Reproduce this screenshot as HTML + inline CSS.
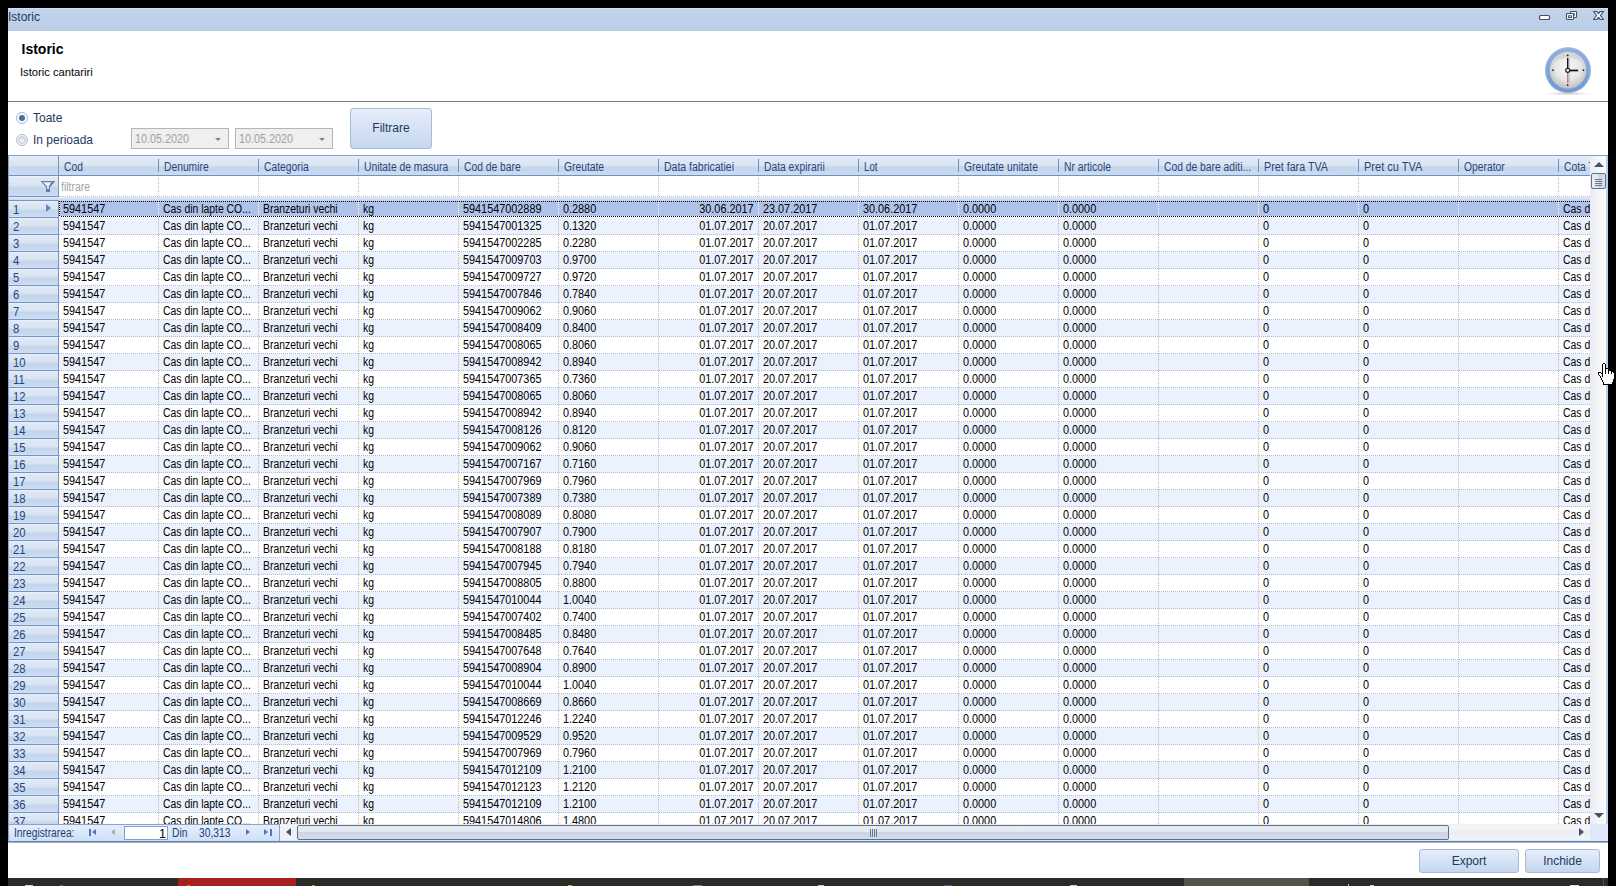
<!DOCTYPE html>
<html><head><meta charset="utf-8"><title>Istoric</title>
<style>
*{box-sizing:border-box;margin:0;padding:0}
html,body{width:1616px;height:886px;overflow:hidden;background:#000}
body{position:relative;font-family:"Liberation Sans",sans-serif;font-size:11px;color:#000}
.abs{position:absolute}
#win{position:absolute;left:8px;top:8px;width:1600px;height:870px;background:#fff}
#title{position:absolute;left:8px;top:8px;width:1600px;height:23px;background:#bfd2ea}
#title .t{position:absolute;left:0px;top:2px;font-size:12px;line-height:15px;color:#1e395b;white-space:nowrap}
#hline{position:absolute;left:8px;top:101px;width:1600px;height:1px;background:#7a7a7a}
#h1{position:absolute;left:21px;top:41px;font-size:13.5px;font-weight:bold;line-height:16px;white-space:nowrap}
#h2{position:absolute;left:20px;top:66px;font-size:11px;line-height:13px;white-space:nowrap}
.lbl{position:absolute;font-size:12px;line-height:14px;color:#1e395b;white-space:nowrap}
.radio{position:absolute;width:12px;height:12px;border-radius:50%;border:1px solid #8e9cb3;background:radial-gradient(circle at 50% 40%,#fff 0,#f1f3f7 45%,#cfd5df 100%)}
.radio.on::after{content:"";position:absolute;left:2px;top:2px;width:6px;height:6px;border-radius:50%;background:#3a5f96}
.date{position:absolute;top:128px;width:98px;height:20px;border:1px solid #b5b5b5;background:#efefef;color:#a0a0a0;font-size:12px;line-height:18px;padding-left:3px;white-space:nowrap}
.date i{position:absolute;right:6px;top:8px;width:0;height:0;border-left:3.5px solid transparent;border-right:3.5px solid transparent;border-top:4px solid #8a8a8a}
.btn{position:absolute;border:1px solid #a9bbd6;border-radius:3px;background:linear-gradient(#e6eefa 0,#d5e2f4 50%,#c5d7ee 100%);color:#1e395b;font-size:12px;text-align:center;white-space:nowrap}
/* grid */
#grid{position:absolute;left:8px;top:155px;width:1600px;height:687px;background:#fff;border-left:1px solid #86a5d2;overflow:hidden}
.hdr{position:absolute;left:0;top:0;width:1581px;height:21px;border-top:1px solid #7f9fcd;border-bottom:1px solid #7f9fcd;background:linear-gradient(#dde7f5 0,#d3dff1 45%,#c4d4ec 55%,#bccfe9 85%,#cbdaef 100%)}
.hc0{position:absolute;left:0;top:0;width:50px;height:19px;border-right:1px solid #7f9fcd}
.hc{position:absolute;top:0;width:100px;height:19px;color:#27457a;font-size:11px;line-height:19px;padding-left:5px;white-space:nowrap;overflow:hidden}
.hc::after{content:"";position:absolute;right:0;top:3px;width:1px;height:13px;background:#7f9fcd}
.frow{position:absolute;left:0;top:21px;width:1581px;height:21px;background:#fff}
.fc0{position:absolute;left:0;top:0;width:50px;height:21px;border-right:1px solid #7f9fcd;border-bottom:1px solid #7f9fcd;background:linear-gradient(#dde7f5 0,#d3dff1 45%,#c4d4ec 55%,#bccfe9 85%,#cbdaef 100%)}
.fc0 svg{position:absolute;left:32px;top:5px}
.ftxt{position:absolute;left:52px;top:4px;color:#a3a3a3;font-size:11px;line-height:14px}
.gap{position:absolute;left:0;top:42px;width:1581px;height:4px;background:linear-gradient(#eef3fb,#d5e1f3)}
.rows{position:absolute;left:0;top:46px;width:1581px;height:623px;overflow:hidden}
.r{position:absolute;left:0;width:1581px;height:17px;background:#fff}
.r.alt{background:#e9f0fc}
.r.sel{background:#afc3ea}
.rh{position:absolute;left:0;top:-1px;width:50px;height:18px;border-top:1px solid #7f9fcd;border-right:1px solid #7f9fcd;color:#27457a;font-size:11px;line-height:18px;padding-left:5px;background:linear-gradient(#dde7f5 0,#d3dff1 45%,#c4d4ec 55%,#bccfe9 85%,#cbdaef 100%)}
.rh i{position:absolute;left:37px;top:4px;width:0;height:0;border-top:4.5px solid transparent;border-bottom:4.5px solid transparent;border-left:5px solid #5484c8}
.c{position:absolute;top:0;width:100px;height:17px;line-height:16px;padding-left:4px;white-space:nowrap;overflow:hidden;font-size:11px}
.c.ra{text-align:right;padding-right:5px;padding-left:0}
.rows{top:45px;height:624px}
.vl{position:absolute;width:1px;background:repeating-linear-gradient(to bottom,transparent 0,transparent 1px,#aab6c8 1px,#aab6c8 2px)}
.hl{position:absolute;left:51px;top:16px;width:1530px;height:1px;background:repeating-linear-gradient(to right,#aab6c8 0,#aab6c8 1px,transparent 1px,transparent 2px)}
.r.sel .hl{background:repeating-linear-gradient(to right,#000 0,#000 1px,#fff 1px,#fff 2px);top:15px}
.r.sel .hl.t{top:0}
.r.sel .hl.b2{top:16px;background:repeating-linear-gradient(to right,#fff 0,#fff 1px,#dfe8f8 1px,#dfe8f8 2px)}
.vlw{position:absolute;top:1px;width:1px;height:14px;background:repeating-linear-gradient(to bottom,#fff 0,#fff 1px,transparent 1px,transparent 2px)}
/* vertical scrollbar */
#vs{position:absolute;left:1581px;top:1px;width:17px;height:668px;background:linear-gradient(to right,#e9ecf1 0,#f4f5f8 50%,#fbfcfd 100%);border-right:1px solid #bcd3f0}
#vs .up{position:absolute;left:4px;top:6px;width:0;height:0;border-left:5px solid transparent;border-right:5px solid transparent;border-bottom:5px solid #46536f}
#vs .dn{position:absolute;left:4px;top:657px;width:0;height:0;border-left:5px solid transparent;border-right:5px solid transparent;border-top:5px solid #46536f}
#vs .th{position:absolute;left:1px;top:17px;width:15px;height:16px;border:1px solid #5f7394;border-radius:2px;background:linear-gradient(to right,#e8ecf3 0,#e3e8f0 45%,#c9d1df 55%,#d8deea 100%)}
#vs .th b{position:absolute;left:3px;width:7px;height:1px;background:#6b7890}
/* navigator */
#nav{position:absolute;left:0;top:669px;width:1599px;height:18px;border-top:1px solid #86a5d2;border-bottom:1px solid #6f89b3;background:linear-gradient(#e6eefb 0,#dbe7f9 50%,#cfdff6 100%)}
#nav .nt{position:absolute;top:1px;line-height:15px;font-size:11px;color:#27457a;white-space:nowrap}
#nav .inp{position:absolute;left:115px;top:1px;width:44px;height:14px;border:1px solid #7f9fcd;background:#fff;text-align:right;padding-right:2px;line-height:13px;font-size:11px;color:#000}
#nav .sep{position:absolute;left:270px;top:0;width:1px;height:16px;background:#86a5d2}
#hs{position:absolute;left:271px;top:0;width:1310px;height:16px;background:linear-gradient(#fdfdfe 0,#f1f4f9 100%)}
#hs .th{position:absolute;left:17px;top:0px;width:1152px;height:15px;border:1px solid #5a6f92;border-radius:2px;background:linear-gradient(#e8ecf3 0,#e4e9f1 45%,#ccd4e2 50%,#d7ddea 100%)}
#hs .th b{position:absolute;top:3px;width:1px;height:8px;background:#6b7890}
#corner{position:absolute;left:1581px;top:0;width:18px;height:16px;background:#dde9fa}
.tri-l{position:absolute;width:0;height:0;border-top:4px solid transparent;border-bottom:4px solid transparent;border-right:5px solid #4d78b5}
.tri-r{position:absolute;width:0;height:0;border-top:4px solid transparent;border-bottom:4px solid transparent;border-left:5px solid #4d78b5}
.bar{position:absolute;width:2px;height:8px;background:#4d78b5}
.c{font-size:11.6px;overflow:visible}
.c span{display:inline-block;transform-origin:0 50%}
.c .s{transform:scaleX(.897)}
.c .n{transform:scaleX(.92)}
.c.ra span{transform-origin:100% 50%}
.hc{font-size:11.6px;line-height:22px}
.hc span{display:inline-block;transform-origin:0 50%;transform:scaleX(.896)}
.rh{font-size:11.6px}
.c .n{transform:scaleX(.935)}
.rh{padding-left:4px;line-height:16px}
.ftxt{font-size:11.6px;transform-origin:0 50%;transform:scaleX(.9);display:inline-block}
#h1{font-size:14px;top:41px;left:22px}
.date{height:21px;line-height:20px}
.date span{display:inline-block;transform-origin:0 50%;transform:scaleX(.95)}
#nav{border-top:none;border-bottom:1px solid #6985b0;height:18px;background:none}
#nav .np{position:absolute;left:0;top:0;width:270px;height:17px;border-top:1px solid #86a5d2;background:linear-gradient(#e6eefb 0,#dbe7f9 50%,#cfdff6 100%)}
#nav .nt{font-size:11.6px;top:2px;transform-origin:0 50%;transform:scaleX(.885)}
#nav .sep{height:17px}
#hs{height:17px;background:linear-gradient(#ececee 0,#f6f6f8 8%,#eceef2 50%,#f0f3f9 90%,#d3e2f7 100%)}
#hs .th{top:1px}
#corner{height:17px}
#nav{border-top:1px solid transparent}
#nav .np{top:-1px}
#nav .nt{top:1px}
#hs{top:-1px}
#corner{top:-1px}
#nav .sep{top:-1px}
#nav .nt{top:0px}
#nav .inp{padding-right:1px;font-size:11.6px;line-height:14px}
#h1{left:21.5px}
#h2{font-size:11.2px}
.date span{transform:scaleX(.9)}
.date{padding-left:2.5px}
.hl{left:50px;width:1531px}
.rh{line-height:18px}
.hdr{overflow:hidden}
#gtop{position:absolute;left:0;top:0;width:1599px;height:1px;background:#7f9fcd}
#vs{width:18px;border-right:2px solid #b9d1f0}
.radio{border:1px solid #a9b8d0;background:#fbfcfe}
.radio::after{content:"";position:absolute;left:1px;top:1px;width:8px;height:8px;border-radius:50%;border:1px solid #c3c8d2;background:radial-gradient(circle at 50% 65%,#f6f6f6 0,#e2e2e2 60%,#cfcfcf 100%)}
.radio.on::after{left:2px;top:2px;width:6px;height:6px;border:none;background:#4a6fa5}
.date i{right:7px;top:9px;border-left:3px solid transparent;border-right:3px solid transparent;border-top:3.5px solid #858585}
.c.ra{padding-right:5.5px}
.radio::after{box-sizing:border-box}
#title{background:linear-gradient(#cfdef2 0,#cfdef2 1px,#c2d4ec 1px,#bbcee7 22px,#b8c9de 22px,#b8c9de 23px)}
.lbl{font-size:12.4px;transform-origin:0 50%;transform:scaleX(.968)}
.hdr,.fc0,.rh,.hc0,.hc::after{border-color:#7694c2}
.hdr{border-top-color:#7290bc;border-bottom-color:#7290bc;background:linear-gradient(#e8f0fb 0,#e8f0fb 1px,#e2e9f5 1px,#d9e4f2 10px,#c4d5eb 11px,#cadaef 18px,#c6dcf8 18px,#c6dcf8 19px)}
.hc::after{background:#7290bc;box-shadow:1px 0 0 #e3edfa}
.fc0{background:linear-gradient(#e8f0fb 0,#e8f0fb 1px,#e2e9f5 1px,#d9e4f2 10px,#c4d5eb 11px,#cadaef 19px,#c6dcf8 19px,#c6dcf8 20px)}
.rh{background:linear-gradient(#e6effb 0,#e6effb 1px,#e0e9f5 1px,#d8e3f2 8px,#c4d5eb 9px,#cadaef 15px,#cfe0f7 15px,#cfe0f7 16px)}
.rh i{top:3px;border-top:4.5px solid transparent;border-bottom:4.5px solid transparent;border-left:5px solid #5b8acb}
.vsel{position:absolute;left:50px;top:0;width:1px;height:16px;background:repeating-linear-gradient(to bottom,#000 0,#000 1px,#fff 1px,#fff 2px)}
#nav{box-shadow:0 1px 0 #a9bbd6}
.tri-l{border-top-width:4.5px;border-bottom-width:4.5px}
.tri-r{border-top-width:4.5px;border-bottom-width:4.5px}
.bar{height:9px}
#grid{height:688px}
#nav>.tri-l,#nav>.tri-r{border-top-width:3.5px;border-bottom-width:3.5px;border-left-width:0;border-right-width:0}
#nav>.tri-l{border-right:4.5px solid #4d78b5}
#nav>.tri-r{border-left:4.5px solid #4d78b5}
#nav>.bar{height:7px}
#nav .nt{color:#1f3d73}
.r.alt{background:#ebf2fd}
.gap{background:linear-gradient(#e4edf9,#bfd1ec)}
.vl{background:repeating-linear-gradient(to bottom,transparent 0,transparent 1px,#b2bccb 1px,#b2bccb 2px)}
.hl{background:repeating-linear-gradient(to right,#b2bccb 0,#b2bccb 1px,transparent 1px,transparent 2px)}
.r.sel .hl.t{background:repeating-linear-gradient(to right,#000 0,#000 1px,transparent 1px,transparent 2px)}
.c{font-size:12.5px;line-height:15.5px}
.c .s{transform:scaleX(.832)}
.c .n{transform:scaleX(.868)}
.hc{font-size:12.5px;line-height:21.4px}
.hc span{transform:scaleX(.8315)}
.rh{font-size:12.5px;line-height:17.4px}
.rh span{display:inline-block;transform-origin:0 50%;transform:scaleX(.9)}
.ftxt{font-size:12.5px;transform:scaleX(.835)}
#nav .nt{font-size:12.5px;line-height:14.4px;transform:scaleX(.821)}
#nav .inp{font-size:12.5px}
.c{line-height:17.5px}
.hc{line-height:23.4px}
.rh{line-height:19.4px}
#nav .nt{line-height:16.4px}
.hc span{transform:scaleX(.824)}
.hc{padding-left:4.6px}
#nav{border-bottom-color:#6a82aa;box-shadow:0 1px 0 #9db0cd}
#h1{top:41.4px}

</style></head>
<body>
<div id="win"></div>
<div id="title"><span class="t">Istoric</span></div>
<div id="h1">Istoric</div>
<div id="h2">Istoric cantariri</div>
<div id="hline"></div>
<div class="radio on" style="left:16px;top:112px"></div>
<div class="lbl" style="left:33px;top:111px">Toate</div>
<div class="radio" style="left:16px;top:134px"></div>
<div class="lbl" style="left:33px;top:133px">In perioada</div>
<div class="date" style="left:131px"><span>10.05.2020</span><i></i></div>
<div class="date" style="left:235px"><span>10.05.2020</span><i></i></div>
<div class="btn" style="left:350px;top:108px;width:82px;height:41px;line-height:39px">Filtrare</div>
<div id="grid">
<div class="hdr"><div class="hc0"></div>
<div class="hc" style="left:50px"><span>Cod</span></div>
<div class="hc" style="left:150px"><span>Denumire</span></div>
<div class="hc" style="left:250px"><span>Categoria</span></div>
<div class="hc" style="left:350px"><span>Unitate de masura</span></div>
<div class="hc" style="left:450px"><span>Cod de bare</span></div>
<div class="hc" style="left:550px"><span>Greutate</span></div>
<div class="hc" style="left:650px"><span style="transform:scaleX(0.84)">Data fabricatiei</span></div>
<div class="hc" style="left:750px"><span>Data expirarii</span></div>
<div class="hc" style="left:850px"><span style="transform:scaleX(0.78)">Lot</span></div>
<div class="hc" style="left:950px"><span>Greutate unitate</span></div>
<div class="hc" style="left:1050px"><span>Nr articole</span></div>
<div class="hc" style="left:1150px"><span>Cod de bare aditi...</span></div>
<div class="hc" style="left:1250px"><span style="transform:scaleX(0.858)">Pret fara TVA</span></div>
<div class="hc" style="left:1350px"><span style="transform:scaleX(0.882)">Pret cu TVA</span></div>
<div class="hc" style="left:1450px"><span>Operator</span></div>
<div class="hc" style="left:1550px"><span>Cota TVA</span></div>
</div>
<div class="frow"><div class="fc0"><svg width="14" height="11" viewBox="0 0 14 11"><path d="M0.6 0.6 L13.4 0.6 L8.4 5.8 L8.4 10.4 L5.6 10.4 L5.6 5.8 Z" fill="#eef3fb" stroke="#6381ad" stroke-width="1.2" stroke-linejoin="miter"/><path d="M10.2 1.2 L12.8 1.2 L8.4 5.8 L7.6 5.8 Z" fill="#6b7c99"/><rect x="5.2" y="8" width="3.6" height="2.9" fill="#5b80b8"/></svg></div><span class="ftxt">filtrare</span></div>
<div class="gap"></div>
<div class="rows">
<div class="r sel" style="top:1px"><div class="rh"><span>1</span><i></i></div>
<div class="c" style="left:50px"><span class="n">5941547</span></div>
<div class="c" style="left:150px"><span class="s">Cas din lapte CO...</span></div>
<div class="c" style="left:250px"><span class="s">Branzeturi vechi</span></div>
<div class="c" style="left:350px"><span class="s">kg</span></div>
<div class="c" style="left:450px"><span class="n">5941547002889</span></div>
<div class="c" style="left:550px"><span class="n">0.2880</span></div>
<div class="c ra" style="left:650px"><span class="n">30.06.2017</span></div>
<div class="c" style="left:750px"><span class="n">23.07.2017</span></div>
<div class="c" style="left:850px"><span class="n">30.06.2017</span></div>
<div class="c" style="left:950px"><span class="n">0.0000</span></div>
<div class="c" style="left:1050px"><span class="n">0.0000</span></div>
<div class="c" style="left:1250px"><span class="n">0</span></div>
<div class="c" style="left:1350px"><span class="n">0</span></div>
<div class="c" style="left:1550px"><span class="s">Cas d</span></div>
<div class="hl"></div>
<div class="hl t"></div><div class="hl b2"></div><div class="vsel"></div>
<div class="vlw" style="left:149px"></div>
<div class="vlw" style="left:249px"></div>
<div class="vlw" style="left:349px"></div>
<div class="vlw" style="left:449px"></div>
<div class="vlw" style="left:549px"></div>
<div class="vlw" style="left:649px"></div>
<div class="vlw" style="left:749px"></div>
<div class="vlw" style="left:849px"></div>
<div class="vlw" style="left:949px"></div>
<div class="vlw" style="left:1049px"></div>
<div class="vlw" style="left:1149px"></div>
<div class="vlw" style="left:1249px"></div>
<div class="vlw" style="left:1349px"></div>
<div class="vlw" style="left:1449px"></div>
<div class="vlw" style="left:1549px"></div>
<div class="vlw" style="left:1649px"></div>
</div>
<div class="r alt" style="top:18px"><div class="rh"><span>2</span></div>
<div class="c" style="left:50px"><span class="n">5941547</span></div>
<div class="c" style="left:150px"><span class="s">Cas din lapte CO...</span></div>
<div class="c" style="left:250px"><span class="s">Branzeturi vechi</span></div>
<div class="c" style="left:350px"><span class="s">kg</span></div>
<div class="c" style="left:450px"><span class="n">5941547001325</span></div>
<div class="c" style="left:550px"><span class="n">0.1320</span></div>
<div class="c ra" style="left:650px"><span class="n">01.07.2017</span></div>
<div class="c" style="left:750px"><span class="n">20.07.2017</span></div>
<div class="c" style="left:850px"><span class="n">01.07.2017</span></div>
<div class="c" style="left:950px"><span class="n">0.0000</span></div>
<div class="c" style="left:1050px"><span class="n">0.0000</span></div>
<div class="c" style="left:1250px"><span class="n">0</span></div>
<div class="c" style="left:1350px"><span class="n">0</span></div>
<div class="c" style="left:1550px"><span class="s">Cas d</span></div>
<div class="hl"></div>
</div>
<div class="r" style="top:35px"><div class="rh"><span>3</span></div>
<div class="c" style="left:50px"><span class="n">5941547</span></div>
<div class="c" style="left:150px"><span class="s">Cas din lapte CO...</span></div>
<div class="c" style="left:250px"><span class="s">Branzeturi vechi</span></div>
<div class="c" style="left:350px"><span class="s">kg</span></div>
<div class="c" style="left:450px"><span class="n">5941547002285</span></div>
<div class="c" style="left:550px"><span class="n">0.2280</span></div>
<div class="c ra" style="left:650px"><span class="n">01.07.2017</span></div>
<div class="c" style="left:750px"><span class="n">20.07.2017</span></div>
<div class="c" style="left:850px"><span class="n">01.07.2017</span></div>
<div class="c" style="left:950px"><span class="n">0.0000</span></div>
<div class="c" style="left:1050px"><span class="n">0.0000</span></div>
<div class="c" style="left:1250px"><span class="n">0</span></div>
<div class="c" style="left:1350px"><span class="n">0</span></div>
<div class="c" style="left:1550px"><span class="s">Cas d</span></div>
<div class="hl"></div>
</div>
<div class="r alt" style="top:52px"><div class="rh"><span>4</span></div>
<div class="c" style="left:50px"><span class="n">5941547</span></div>
<div class="c" style="left:150px"><span class="s">Cas din lapte CO...</span></div>
<div class="c" style="left:250px"><span class="s">Branzeturi vechi</span></div>
<div class="c" style="left:350px"><span class="s">kg</span></div>
<div class="c" style="left:450px"><span class="n">5941547009703</span></div>
<div class="c" style="left:550px"><span class="n">0.9700</span></div>
<div class="c ra" style="left:650px"><span class="n">01.07.2017</span></div>
<div class="c" style="left:750px"><span class="n">20.07.2017</span></div>
<div class="c" style="left:850px"><span class="n">01.07.2017</span></div>
<div class="c" style="left:950px"><span class="n">0.0000</span></div>
<div class="c" style="left:1050px"><span class="n">0.0000</span></div>
<div class="c" style="left:1250px"><span class="n">0</span></div>
<div class="c" style="left:1350px"><span class="n">0</span></div>
<div class="c" style="left:1550px"><span class="s">Cas d</span></div>
<div class="hl"></div>
</div>
<div class="r" style="top:69px"><div class="rh"><span>5</span></div>
<div class="c" style="left:50px"><span class="n">5941547</span></div>
<div class="c" style="left:150px"><span class="s">Cas din lapte CO...</span></div>
<div class="c" style="left:250px"><span class="s">Branzeturi vechi</span></div>
<div class="c" style="left:350px"><span class="s">kg</span></div>
<div class="c" style="left:450px"><span class="n">5941547009727</span></div>
<div class="c" style="left:550px"><span class="n">0.9720</span></div>
<div class="c ra" style="left:650px"><span class="n">01.07.2017</span></div>
<div class="c" style="left:750px"><span class="n">20.07.2017</span></div>
<div class="c" style="left:850px"><span class="n">01.07.2017</span></div>
<div class="c" style="left:950px"><span class="n">0.0000</span></div>
<div class="c" style="left:1050px"><span class="n">0.0000</span></div>
<div class="c" style="left:1250px"><span class="n">0</span></div>
<div class="c" style="left:1350px"><span class="n">0</span></div>
<div class="c" style="left:1550px"><span class="s">Cas d</span></div>
<div class="hl"></div>
</div>
<div class="r alt" style="top:86px"><div class="rh"><span>6</span></div>
<div class="c" style="left:50px"><span class="n">5941547</span></div>
<div class="c" style="left:150px"><span class="s">Cas din lapte CO...</span></div>
<div class="c" style="left:250px"><span class="s">Branzeturi vechi</span></div>
<div class="c" style="left:350px"><span class="s">kg</span></div>
<div class="c" style="left:450px"><span class="n">5941547007846</span></div>
<div class="c" style="left:550px"><span class="n">0.7840</span></div>
<div class="c ra" style="left:650px"><span class="n">01.07.2017</span></div>
<div class="c" style="left:750px"><span class="n">20.07.2017</span></div>
<div class="c" style="left:850px"><span class="n">01.07.2017</span></div>
<div class="c" style="left:950px"><span class="n">0.0000</span></div>
<div class="c" style="left:1050px"><span class="n">0.0000</span></div>
<div class="c" style="left:1250px"><span class="n">0</span></div>
<div class="c" style="left:1350px"><span class="n">0</span></div>
<div class="c" style="left:1550px"><span class="s">Cas d</span></div>
<div class="hl"></div>
</div>
<div class="r" style="top:103px"><div class="rh"><span>7</span></div>
<div class="c" style="left:50px"><span class="n">5941547</span></div>
<div class="c" style="left:150px"><span class="s">Cas din lapte CO...</span></div>
<div class="c" style="left:250px"><span class="s">Branzeturi vechi</span></div>
<div class="c" style="left:350px"><span class="s">kg</span></div>
<div class="c" style="left:450px"><span class="n">5941547009062</span></div>
<div class="c" style="left:550px"><span class="n">0.9060</span></div>
<div class="c ra" style="left:650px"><span class="n">01.07.2017</span></div>
<div class="c" style="left:750px"><span class="n">20.07.2017</span></div>
<div class="c" style="left:850px"><span class="n">01.07.2017</span></div>
<div class="c" style="left:950px"><span class="n">0.0000</span></div>
<div class="c" style="left:1050px"><span class="n">0.0000</span></div>
<div class="c" style="left:1250px"><span class="n">0</span></div>
<div class="c" style="left:1350px"><span class="n">0</span></div>
<div class="c" style="left:1550px"><span class="s">Cas d</span></div>
<div class="hl"></div>
</div>
<div class="r alt" style="top:120px"><div class="rh"><span>8</span></div>
<div class="c" style="left:50px"><span class="n">5941547</span></div>
<div class="c" style="left:150px"><span class="s">Cas din lapte CO...</span></div>
<div class="c" style="left:250px"><span class="s">Branzeturi vechi</span></div>
<div class="c" style="left:350px"><span class="s">kg</span></div>
<div class="c" style="left:450px"><span class="n">5941547008409</span></div>
<div class="c" style="left:550px"><span class="n">0.8400</span></div>
<div class="c ra" style="left:650px"><span class="n">01.07.2017</span></div>
<div class="c" style="left:750px"><span class="n">20.07.2017</span></div>
<div class="c" style="left:850px"><span class="n">01.07.2017</span></div>
<div class="c" style="left:950px"><span class="n">0.0000</span></div>
<div class="c" style="left:1050px"><span class="n">0.0000</span></div>
<div class="c" style="left:1250px"><span class="n">0</span></div>
<div class="c" style="left:1350px"><span class="n">0</span></div>
<div class="c" style="left:1550px"><span class="s">Cas d</span></div>
<div class="hl"></div>
</div>
<div class="r" style="top:137px"><div class="rh"><span>9</span></div>
<div class="c" style="left:50px"><span class="n">5941547</span></div>
<div class="c" style="left:150px"><span class="s">Cas din lapte CO...</span></div>
<div class="c" style="left:250px"><span class="s">Branzeturi vechi</span></div>
<div class="c" style="left:350px"><span class="s">kg</span></div>
<div class="c" style="left:450px"><span class="n">5941547008065</span></div>
<div class="c" style="left:550px"><span class="n">0.8060</span></div>
<div class="c ra" style="left:650px"><span class="n">01.07.2017</span></div>
<div class="c" style="left:750px"><span class="n">20.07.2017</span></div>
<div class="c" style="left:850px"><span class="n">01.07.2017</span></div>
<div class="c" style="left:950px"><span class="n">0.0000</span></div>
<div class="c" style="left:1050px"><span class="n">0.0000</span></div>
<div class="c" style="left:1250px"><span class="n">0</span></div>
<div class="c" style="left:1350px"><span class="n">0</span></div>
<div class="c" style="left:1550px"><span class="s">Cas d</span></div>
<div class="hl"></div>
</div>
<div class="r alt" style="top:154px"><div class="rh"><span>10</span></div>
<div class="c" style="left:50px"><span class="n">5941547</span></div>
<div class="c" style="left:150px"><span class="s">Cas din lapte CO...</span></div>
<div class="c" style="left:250px"><span class="s">Branzeturi vechi</span></div>
<div class="c" style="left:350px"><span class="s">kg</span></div>
<div class="c" style="left:450px"><span class="n">5941547008942</span></div>
<div class="c" style="left:550px"><span class="n">0.8940</span></div>
<div class="c ra" style="left:650px"><span class="n">01.07.2017</span></div>
<div class="c" style="left:750px"><span class="n">20.07.2017</span></div>
<div class="c" style="left:850px"><span class="n">01.07.2017</span></div>
<div class="c" style="left:950px"><span class="n">0.0000</span></div>
<div class="c" style="left:1050px"><span class="n">0.0000</span></div>
<div class="c" style="left:1250px"><span class="n">0</span></div>
<div class="c" style="left:1350px"><span class="n">0</span></div>
<div class="c" style="left:1550px"><span class="s">Cas d</span></div>
<div class="hl"></div>
</div>
<div class="r" style="top:171px"><div class="rh"><span>11</span></div>
<div class="c" style="left:50px"><span class="n">5941547</span></div>
<div class="c" style="left:150px"><span class="s">Cas din lapte CO...</span></div>
<div class="c" style="left:250px"><span class="s">Branzeturi vechi</span></div>
<div class="c" style="left:350px"><span class="s">kg</span></div>
<div class="c" style="left:450px"><span class="n">5941547007365</span></div>
<div class="c" style="left:550px"><span class="n">0.7360</span></div>
<div class="c ra" style="left:650px"><span class="n">01.07.2017</span></div>
<div class="c" style="left:750px"><span class="n">20.07.2017</span></div>
<div class="c" style="left:850px"><span class="n">01.07.2017</span></div>
<div class="c" style="left:950px"><span class="n">0.0000</span></div>
<div class="c" style="left:1050px"><span class="n">0.0000</span></div>
<div class="c" style="left:1250px"><span class="n">0</span></div>
<div class="c" style="left:1350px"><span class="n">0</span></div>
<div class="c" style="left:1550px"><span class="s">Cas d</span></div>
<div class="hl"></div>
</div>
<div class="r alt" style="top:188px"><div class="rh"><span>12</span></div>
<div class="c" style="left:50px"><span class="n">5941547</span></div>
<div class="c" style="left:150px"><span class="s">Cas din lapte CO...</span></div>
<div class="c" style="left:250px"><span class="s">Branzeturi vechi</span></div>
<div class="c" style="left:350px"><span class="s">kg</span></div>
<div class="c" style="left:450px"><span class="n">5941547008065</span></div>
<div class="c" style="left:550px"><span class="n">0.8060</span></div>
<div class="c ra" style="left:650px"><span class="n">01.07.2017</span></div>
<div class="c" style="left:750px"><span class="n">20.07.2017</span></div>
<div class="c" style="left:850px"><span class="n">01.07.2017</span></div>
<div class="c" style="left:950px"><span class="n">0.0000</span></div>
<div class="c" style="left:1050px"><span class="n">0.0000</span></div>
<div class="c" style="left:1250px"><span class="n">0</span></div>
<div class="c" style="left:1350px"><span class="n">0</span></div>
<div class="c" style="left:1550px"><span class="s">Cas d</span></div>
<div class="hl"></div>
</div>
<div class="r" style="top:205px"><div class="rh"><span>13</span></div>
<div class="c" style="left:50px"><span class="n">5941547</span></div>
<div class="c" style="left:150px"><span class="s">Cas din lapte CO...</span></div>
<div class="c" style="left:250px"><span class="s">Branzeturi vechi</span></div>
<div class="c" style="left:350px"><span class="s">kg</span></div>
<div class="c" style="left:450px"><span class="n">5941547008942</span></div>
<div class="c" style="left:550px"><span class="n">0.8940</span></div>
<div class="c ra" style="left:650px"><span class="n">01.07.2017</span></div>
<div class="c" style="left:750px"><span class="n">20.07.2017</span></div>
<div class="c" style="left:850px"><span class="n">01.07.2017</span></div>
<div class="c" style="left:950px"><span class="n">0.0000</span></div>
<div class="c" style="left:1050px"><span class="n">0.0000</span></div>
<div class="c" style="left:1250px"><span class="n">0</span></div>
<div class="c" style="left:1350px"><span class="n">0</span></div>
<div class="c" style="left:1550px"><span class="s">Cas d</span></div>
<div class="hl"></div>
</div>
<div class="r alt" style="top:222px"><div class="rh"><span>14</span></div>
<div class="c" style="left:50px"><span class="n">5941547</span></div>
<div class="c" style="left:150px"><span class="s">Cas din lapte CO...</span></div>
<div class="c" style="left:250px"><span class="s">Branzeturi vechi</span></div>
<div class="c" style="left:350px"><span class="s">kg</span></div>
<div class="c" style="left:450px"><span class="n">5941547008126</span></div>
<div class="c" style="left:550px"><span class="n">0.8120</span></div>
<div class="c ra" style="left:650px"><span class="n">01.07.2017</span></div>
<div class="c" style="left:750px"><span class="n">20.07.2017</span></div>
<div class="c" style="left:850px"><span class="n">01.07.2017</span></div>
<div class="c" style="left:950px"><span class="n">0.0000</span></div>
<div class="c" style="left:1050px"><span class="n">0.0000</span></div>
<div class="c" style="left:1250px"><span class="n">0</span></div>
<div class="c" style="left:1350px"><span class="n">0</span></div>
<div class="c" style="left:1550px"><span class="s">Cas d</span></div>
<div class="hl"></div>
</div>
<div class="r" style="top:239px"><div class="rh"><span>15</span></div>
<div class="c" style="left:50px"><span class="n">5941547</span></div>
<div class="c" style="left:150px"><span class="s">Cas din lapte CO...</span></div>
<div class="c" style="left:250px"><span class="s">Branzeturi vechi</span></div>
<div class="c" style="left:350px"><span class="s">kg</span></div>
<div class="c" style="left:450px"><span class="n">5941547009062</span></div>
<div class="c" style="left:550px"><span class="n">0.9060</span></div>
<div class="c ra" style="left:650px"><span class="n">01.07.2017</span></div>
<div class="c" style="left:750px"><span class="n">20.07.2017</span></div>
<div class="c" style="left:850px"><span class="n">01.07.2017</span></div>
<div class="c" style="left:950px"><span class="n">0.0000</span></div>
<div class="c" style="left:1050px"><span class="n">0.0000</span></div>
<div class="c" style="left:1250px"><span class="n">0</span></div>
<div class="c" style="left:1350px"><span class="n">0</span></div>
<div class="c" style="left:1550px"><span class="s">Cas d</span></div>
<div class="hl"></div>
</div>
<div class="r alt" style="top:256px"><div class="rh"><span>16</span></div>
<div class="c" style="left:50px"><span class="n">5941547</span></div>
<div class="c" style="left:150px"><span class="s">Cas din lapte CO...</span></div>
<div class="c" style="left:250px"><span class="s">Branzeturi vechi</span></div>
<div class="c" style="left:350px"><span class="s">kg</span></div>
<div class="c" style="left:450px"><span class="n">5941547007167</span></div>
<div class="c" style="left:550px"><span class="n">0.7160</span></div>
<div class="c ra" style="left:650px"><span class="n">01.07.2017</span></div>
<div class="c" style="left:750px"><span class="n">20.07.2017</span></div>
<div class="c" style="left:850px"><span class="n">01.07.2017</span></div>
<div class="c" style="left:950px"><span class="n">0.0000</span></div>
<div class="c" style="left:1050px"><span class="n">0.0000</span></div>
<div class="c" style="left:1250px"><span class="n">0</span></div>
<div class="c" style="left:1350px"><span class="n">0</span></div>
<div class="c" style="left:1550px"><span class="s">Cas d</span></div>
<div class="hl"></div>
</div>
<div class="r" style="top:273px"><div class="rh"><span>17</span></div>
<div class="c" style="left:50px"><span class="n">5941547</span></div>
<div class="c" style="left:150px"><span class="s">Cas din lapte CO...</span></div>
<div class="c" style="left:250px"><span class="s">Branzeturi vechi</span></div>
<div class="c" style="left:350px"><span class="s">kg</span></div>
<div class="c" style="left:450px"><span class="n">5941547007969</span></div>
<div class="c" style="left:550px"><span class="n">0.7960</span></div>
<div class="c ra" style="left:650px"><span class="n">01.07.2017</span></div>
<div class="c" style="left:750px"><span class="n">20.07.2017</span></div>
<div class="c" style="left:850px"><span class="n">01.07.2017</span></div>
<div class="c" style="left:950px"><span class="n">0.0000</span></div>
<div class="c" style="left:1050px"><span class="n">0.0000</span></div>
<div class="c" style="left:1250px"><span class="n">0</span></div>
<div class="c" style="left:1350px"><span class="n">0</span></div>
<div class="c" style="left:1550px"><span class="s">Cas d</span></div>
<div class="hl"></div>
</div>
<div class="r alt" style="top:290px"><div class="rh"><span>18</span></div>
<div class="c" style="left:50px"><span class="n">5941547</span></div>
<div class="c" style="left:150px"><span class="s">Cas din lapte CO...</span></div>
<div class="c" style="left:250px"><span class="s">Branzeturi vechi</span></div>
<div class="c" style="left:350px"><span class="s">kg</span></div>
<div class="c" style="left:450px"><span class="n">5941547007389</span></div>
<div class="c" style="left:550px"><span class="n">0.7380</span></div>
<div class="c ra" style="left:650px"><span class="n">01.07.2017</span></div>
<div class="c" style="left:750px"><span class="n">20.07.2017</span></div>
<div class="c" style="left:850px"><span class="n">01.07.2017</span></div>
<div class="c" style="left:950px"><span class="n">0.0000</span></div>
<div class="c" style="left:1050px"><span class="n">0.0000</span></div>
<div class="c" style="left:1250px"><span class="n">0</span></div>
<div class="c" style="left:1350px"><span class="n">0</span></div>
<div class="c" style="left:1550px"><span class="s">Cas d</span></div>
<div class="hl"></div>
</div>
<div class="r" style="top:307px"><div class="rh"><span>19</span></div>
<div class="c" style="left:50px"><span class="n">5941547</span></div>
<div class="c" style="left:150px"><span class="s">Cas din lapte CO...</span></div>
<div class="c" style="left:250px"><span class="s">Branzeturi vechi</span></div>
<div class="c" style="left:350px"><span class="s">kg</span></div>
<div class="c" style="left:450px"><span class="n">5941547008089</span></div>
<div class="c" style="left:550px"><span class="n">0.8080</span></div>
<div class="c ra" style="left:650px"><span class="n">01.07.2017</span></div>
<div class="c" style="left:750px"><span class="n">20.07.2017</span></div>
<div class="c" style="left:850px"><span class="n">01.07.2017</span></div>
<div class="c" style="left:950px"><span class="n">0.0000</span></div>
<div class="c" style="left:1050px"><span class="n">0.0000</span></div>
<div class="c" style="left:1250px"><span class="n">0</span></div>
<div class="c" style="left:1350px"><span class="n">0</span></div>
<div class="c" style="left:1550px"><span class="s">Cas d</span></div>
<div class="hl"></div>
</div>
<div class="r alt" style="top:324px"><div class="rh"><span>20</span></div>
<div class="c" style="left:50px"><span class="n">5941547</span></div>
<div class="c" style="left:150px"><span class="s">Cas din lapte CO...</span></div>
<div class="c" style="left:250px"><span class="s">Branzeturi vechi</span></div>
<div class="c" style="left:350px"><span class="s">kg</span></div>
<div class="c" style="left:450px"><span class="n">5941547007907</span></div>
<div class="c" style="left:550px"><span class="n">0.7900</span></div>
<div class="c ra" style="left:650px"><span class="n">01.07.2017</span></div>
<div class="c" style="left:750px"><span class="n">20.07.2017</span></div>
<div class="c" style="left:850px"><span class="n">01.07.2017</span></div>
<div class="c" style="left:950px"><span class="n">0.0000</span></div>
<div class="c" style="left:1050px"><span class="n">0.0000</span></div>
<div class="c" style="left:1250px"><span class="n">0</span></div>
<div class="c" style="left:1350px"><span class="n">0</span></div>
<div class="c" style="left:1550px"><span class="s">Cas d</span></div>
<div class="hl"></div>
</div>
<div class="r" style="top:341px"><div class="rh"><span>21</span></div>
<div class="c" style="left:50px"><span class="n">5941547</span></div>
<div class="c" style="left:150px"><span class="s">Cas din lapte CO...</span></div>
<div class="c" style="left:250px"><span class="s">Branzeturi vechi</span></div>
<div class="c" style="left:350px"><span class="s">kg</span></div>
<div class="c" style="left:450px"><span class="n">5941547008188</span></div>
<div class="c" style="left:550px"><span class="n">0.8180</span></div>
<div class="c ra" style="left:650px"><span class="n">01.07.2017</span></div>
<div class="c" style="left:750px"><span class="n">20.07.2017</span></div>
<div class="c" style="left:850px"><span class="n">01.07.2017</span></div>
<div class="c" style="left:950px"><span class="n">0.0000</span></div>
<div class="c" style="left:1050px"><span class="n">0.0000</span></div>
<div class="c" style="left:1250px"><span class="n">0</span></div>
<div class="c" style="left:1350px"><span class="n">0</span></div>
<div class="c" style="left:1550px"><span class="s">Cas d</span></div>
<div class="hl"></div>
</div>
<div class="r alt" style="top:358px"><div class="rh"><span>22</span></div>
<div class="c" style="left:50px"><span class="n">5941547</span></div>
<div class="c" style="left:150px"><span class="s">Cas din lapte CO...</span></div>
<div class="c" style="left:250px"><span class="s">Branzeturi vechi</span></div>
<div class="c" style="left:350px"><span class="s">kg</span></div>
<div class="c" style="left:450px"><span class="n">5941547007945</span></div>
<div class="c" style="left:550px"><span class="n">0.7940</span></div>
<div class="c ra" style="left:650px"><span class="n">01.07.2017</span></div>
<div class="c" style="left:750px"><span class="n">20.07.2017</span></div>
<div class="c" style="left:850px"><span class="n">01.07.2017</span></div>
<div class="c" style="left:950px"><span class="n">0.0000</span></div>
<div class="c" style="left:1050px"><span class="n">0.0000</span></div>
<div class="c" style="left:1250px"><span class="n">0</span></div>
<div class="c" style="left:1350px"><span class="n">0</span></div>
<div class="c" style="left:1550px"><span class="s">Cas d</span></div>
<div class="hl"></div>
</div>
<div class="r" style="top:375px"><div class="rh"><span>23</span></div>
<div class="c" style="left:50px"><span class="n">5941547</span></div>
<div class="c" style="left:150px"><span class="s">Cas din lapte CO...</span></div>
<div class="c" style="left:250px"><span class="s">Branzeturi vechi</span></div>
<div class="c" style="left:350px"><span class="s">kg</span></div>
<div class="c" style="left:450px"><span class="n">5941547008805</span></div>
<div class="c" style="left:550px"><span class="n">0.8800</span></div>
<div class="c ra" style="left:650px"><span class="n">01.07.2017</span></div>
<div class="c" style="left:750px"><span class="n">20.07.2017</span></div>
<div class="c" style="left:850px"><span class="n">01.07.2017</span></div>
<div class="c" style="left:950px"><span class="n">0.0000</span></div>
<div class="c" style="left:1050px"><span class="n">0.0000</span></div>
<div class="c" style="left:1250px"><span class="n">0</span></div>
<div class="c" style="left:1350px"><span class="n">0</span></div>
<div class="c" style="left:1550px"><span class="s">Cas d</span></div>
<div class="hl"></div>
</div>
<div class="r alt" style="top:392px"><div class="rh"><span>24</span></div>
<div class="c" style="left:50px"><span class="n">5941547</span></div>
<div class="c" style="left:150px"><span class="s">Cas din lapte CO...</span></div>
<div class="c" style="left:250px"><span class="s">Branzeturi vechi</span></div>
<div class="c" style="left:350px"><span class="s">kg</span></div>
<div class="c" style="left:450px"><span class="n">5941547010044</span></div>
<div class="c" style="left:550px"><span class="n">1.0040</span></div>
<div class="c ra" style="left:650px"><span class="n">01.07.2017</span></div>
<div class="c" style="left:750px"><span class="n">20.07.2017</span></div>
<div class="c" style="left:850px"><span class="n">01.07.2017</span></div>
<div class="c" style="left:950px"><span class="n">0.0000</span></div>
<div class="c" style="left:1050px"><span class="n">0.0000</span></div>
<div class="c" style="left:1250px"><span class="n">0</span></div>
<div class="c" style="left:1350px"><span class="n">0</span></div>
<div class="c" style="left:1550px"><span class="s">Cas d</span></div>
<div class="hl"></div>
</div>
<div class="r" style="top:409px"><div class="rh"><span>25</span></div>
<div class="c" style="left:50px"><span class="n">5941547</span></div>
<div class="c" style="left:150px"><span class="s">Cas din lapte CO...</span></div>
<div class="c" style="left:250px"><span class="s">Branzeturi vechi</span></div>
<div class="c" style="left:350px"><span class="s">kg</span></div>
<div class="c" style="left:450px"><span class="n">5941547007402</span></div>
<div class="c" style="left:550px"><span class="n">0.7400</span></div>
<div class="c ra" style="left:650px"><span class="n">01.07.2017</span></div>
<div class="c" style="left:750px"><span class="n">20.07.2017</span></div>
<div class="c" style="left:850px"><span class="n">01.07.2017</span></div>
<div class="c" style="left:950px"><span class="n">0.0000</span></div>
<div class="c" style="left:1050px"><span class="n">0.0000</span></div>
<div class="c" style="left:1250px"><span class="n">0</span></div>
<div class="c" style="left:1350px"><span class="n">0</span></div>
<div class="c" style="left:1550px"><span class="s">Cas d</span></div>
<div class="hl"></div>
</div>
<div class="r alt" style="top:426px"><div class="rh"><span>26</span></div>
<div class="c" style="left:50px"><span class="n">5941547</span></div>
<div class="c" style="left:150px"><span class="s">Cas din lapte CO...</span></div>
<div class="c" style="left:250px"><span class="s">Branzeturi vechi</span></div>
<div class="c" style="left:350px"><span class="s">kg</span></div>
<div class="c" style="left:450px"><span class="n">5941547008485</span></div>
<div class="c" style="left:550px"><span class="n">0.8480</span></div>
<div class="c ra" style="left:650px"><span class="n">01.07.2017</span></div>
<div class="c" style="left:750px"><span class="n">20.07.2017</span></div>
<div class="c" style="left:850px"><span class="n">01.07.2017</span></div>
<div class="c" style="left:950px"><span class="n">0.0000</span></div>
<div class="c" style="left:1050px"><span class="n">0.0000</span></div>
<div class="c" style="left:1250px"><span class="n">0</span></div>
<div class="c" style="left:1350px"><span class="n">0</span></div>
<div class="c" style="left:1550px"><span class="s">Cas d</span></div>
<div class="hl"></div>
</div>
<div class="r" style="top:443px"><div class="rh"><span>27</span></div>
<div class="c" style="left:50px"><span class="n">5941547</span></div>
<div class="c" style="left:150px"><span class="s">Cas din lapte CO...</span></div>
<div class="c" style="left:250px"><span class="s">Branzeturi vechi</span></div>
<div class="c" style="left:350px"><span class="s">kg</span></div>
<div class="c" style="left:450px"><span class="n">5941547007648</span></div>
<div class="c" style="left:550px"><span class="n">0.7640</span></div>
<div class="c ra" style="left:650px"><span class="n">01.07.2017</span></div>
<div class="c" style="left:750px"><span class="n">20.07.2017</span></div>
<div class="c" style="left:850px"><span class="n">01.07.2017</span></div>
<div class="c" style="left:950px"><span class="n">0.0000</span></div>
<div class="c" style="left:1050px"><span class="n">0.0000</span></div>
<div class="c" style="left:1250px"><span class="n">0</span></div>
<div class="c" style="left:1350px"><span class="n">0</span></div>
<div class="c" style="left:1550px"><span class="s">Cas d</span></div>
<div class="hl"></div>
</div>
<div class="r alt" style="top:460px"><div class="rh"><span>28</span></div>
<div class="c" style="left:50px"><span class="n">5941547</span></div>
<div class="c" style="left:150px"><span class="s">Cas din lapte CO...</span></div>
<div class="c" style="left:250px"><span class="s">Branzeturi vechi</span></div>
<div class="c" style="left:350px"><span class="s">kg</span></div>
<div class="c" style="left:450px"><span class="n">5941547008904</span></div>
<div class="c" style="left:550px"><span class="n">0.8900</span></div>
<div class="c ra" style="left:650px"><span class="n">01.07.2017</span></div>
<div class="c" style="left:750px"><span class="n">20.07.2017</span></div>
<div class="c" style="left:850px"><span class="n">01.07.2017</span></div>
<div class="c" style="left:950px"><span class="n">0.0000</span></div>
<div class="c" style="left:1050px"><span class="n">0.0000</span></div>
<div class="c" style="left:1250px"><span class="n">0</span></div>
<div class="c" style="left:1350px"><span class="n">0</span></div>
<div class="c" style="left:1550px"><span class="s">Cas d</span></div>
<div class="hl"></div>
</div>
<div class="r" style="top:477px"><div class="rh"><span>29</span></div>
<div class="c" style="left:50px"><span class="n">5941547</span></div>
<div class="c" style="left:150px"><span class="s">Cas din lapte CO...</span></div>
<div class="c" style="left:250px"><span class="s">Branzeturi vechi</span></div>
<div class="c" style="left:350px"><span class="s">kg</span></div>
<div class="c" style="left:450px"><span class="n">5941547010044</span></div>
<div class="c" style="left:550px"><span class="n">1.0040</span></div>
<div class="c ra" style="left:650px"><span class="n">01.07.2017</span></div>
<div class="c" style="left:750px"><span class="n">20.07.2017</span></div>
<div class="c" style="left:850px"><span class="n">01.07.2017</span></div>
<div class="c" style="left:950px"><span class="n">0.0000</span></div>
<div class="c" style="left:1050px"><span class="n">0.0000</span></div>
<div class="c" style="left:1250px"><span class="n">0</span></div>
<div class="c" style="left:1350px"><span class="n">0</span></div>
<div class="c" style="left:1550px"><span class="s">Cas d</span></div>
<div class="hl"></div>
</div>
<div class="r alt" style="top:494px"><div class="rh"><span>30</span></div>
<div class="c" style="left:50px"><span class="n">5941547</span></div>
<div class="c" style="left:150px"><span class="s">Cas din lapte CO...</span></div>
<div class="c" style="left:250px"><span class="s">Branzeturi vechi</span></div>
<div class="c" style="left:350px"><span class="s">kg</span></div>
<div class="c" style="left:450px"><span class="n">5941547008669</span></div>
<div class="c" style="left:550px"><span class="n">0.8660</span></div>
<div class="c ra" style="left:650px"><span class="n">01.07.2017</span></div>
<div class="c" style="left:750px"><span class="n">20.07.2017</span></div>
<div class="c" style="left:850px"><span class="n">01.07.2017</span></div>
<div class="c" style="left:950px"><span class="n">0.0000</span></div>
<div class="c" style="left:1050px"><span class="n">0.0000</span></div>
<div class="c" style="left:1250px"><span class="n">0</span></div>
<div class="c" style="left:1350px"><span class="n">0</span></div>
<div class="c" style="left:1550px"><span class="s">Cas d</span></div>
<div class="hl"></div>
</div>
<div class="r" style="top:511px"><div class="rh"><span>31</span></div>
<div class="c" style="left:50px"><span class="n">5941547</span></div>
<div class="c" style="left:150px"><span class="s">Cas din lapte CO...</span></div>
<div class="c" style="left:250px"><span class="s">Branzeturi vechi</span></div>
<div class="c" style="left:350px"><span class="s">kg</span></div>
<div class="c" style="left:450px"><span class="n">5941547012246</span></div>
<div class="c" style="left:550px"><span class="n">1.2240</span></div>
<div class="c ra" style="left:650px"><span class="n">01.07.2017</span></div>
<div class="c" style="left:750px"><span class="n">20.07.2017</span></div>
<div class="c" style="left:850px"><span class="n">01.07.2017</span></div>
<div class="c" style="left:950px"><span class="n">0.0000</span></div>
<div class="c" style="left:1050px"><span class="n">0.0000</span></div>
<div class="c" style="left:1250px"><span class="n">0</span></div>
<div class="c" style="left:1350px"><span class="n">0</span></div>
<div class="c" style="left:1550px"><span class="s">Cas d</span></div>
<div class="hl"></div>
</div>
<div class="r alt" style="top:528px"><div class="rh"><span>32</span></div>
<div class="c" style="left:50px"><span class="n">5941547</span></div>
<div class="c" style="left:150px"><span class="s">Cas din lapte CO...</span></div>
<div class="c" style="left:250px"><span class="s">Branzeturi vechi</span></div>
<div class="c" style="left:350px"><span class="s">kg</span></div>
<div class="c" style="left:450px"><span class="n">5941547009529</span></div>
<div class="c" style="left:550px"><span class="n">0.9520</span></div>
<div class="c ra" style="left:650px"><span class="n">01.07.2017</span></div>
<div class="c" style="left:750px"><span class="n">20.07.2017</span></div>
<div class="c" style="left:850px"><span class="n">01.07.2017</span></div>
<div class="c" style="left:950px"><span class="n">0.0000</span></div>
<div class="c" style="left:1050px"><span class="n">0.0000</span></div>
<div class="c" style="left:1250px"><span class="n">0</span></div>
<div class="c" style="left:1350px"><span class="n">0</span></div>
<div class="c" style="left:1550px"><span class="s">Cas d</span></div>
<div class="hl"></div>
</div>
<div class="r" style="top:545px"><div class="rh"><span>33</span></div>
<div class="c" style="left:50px"><span class="n">5941547</span></div>
<div class="c" style="left:150px"><span class="s">Cas din lapte CO...</span></div>
<div class="c" style="left:250px"><span class="s">Branzeturi vechi</span></div>
<div class="c" style="left:350px"><span class="s">kg</span></div>
<div class="c" style="left:450px"><span class="n">5941547007969</span></div>
<div class="c" style="left:550px"><span class="n">0.7960</span></div>
<div class="c ra" style="left:650px"><span class="n">01.07.2017</span></div>
<div class="c" style="left:750px"><span class="n">20.07.2017</span></div>
<div class="c" style="left:850px"><span class="n">01.07.2017</span></div>
<div class="c" style="left:950px"><span class="n">0.0000</span></div>
<div class="c" style="left:1050px"><span class="n">0.0000</span></div>
<div class="c" style="left:1250px"><span class="n">0</span></div>
<div class="c" style="left:1350px"><span class="n">0</span></div>
<div class="c" style="left:1550px"><span class="s">Cas d</span></div>
<div class="hl"></div>
</div>
<div class="r alt" style="top:562px"><div class="rh"><span>34</span></div>
<div class="c" style="left:50px"><span class="n">5941547</span></div>
<div class="c" style="left:150px"><span class="s">Cas din lapte CO...</span></div>
<div class="c" style="left:250px"><span class="s">Branzeturi vechi</span></div>
<div class="c" style="left:350px"><span class="s">kg</span></div>
<div class="c" style="left:450px"><span class="n">5941547012109</span></div>
<div class="c" style="left:550px"><span class="n">1.2100</span></div>
<div class="c ra" style="left:650px"><span class="n">01.07.2017</span></div>
<div class="c" style="left:750px"><span class="n">20.07.2017</span></div>
<div class="c" style="left:850px"><span class="n">01.07.2017</span></div>
<div class="c" style="left:950px"><span class="n">0.0000</span></div>
<div class="c" style="left:1050px"><span class="n">0.0000</span></div>
<div class="c" style="left:1250px"><span class="n">0</span></div>
<div class="c" style="left:1350px"><span class="n">0</span></div>
<div class="c" style="left:1550px"><span class="s">Cas d</span></div>
<div class="hl"></div>
</div>
<div class="r" style="top:579px"><div class="rh"><span>35</span></div>
<div class="c" style="left:50px"><span class="n">5941547</span></div>
<div class="c" style="left:150px"><span class="s">Cas din lapte CO...</span></div>
<div class="c" style="left:250px"><span class="s">Branzeturi vechi</span></div>
<div class="c" style="left:350px"><span class="s">kg</span></div>
<div class="c" style="left:450px"><span class="n">5941547012123</span></div>
<div class="c" style="left:550px"><span class="n">1.2120</span></div>
<div class="c ra" style="left:650px"><span class="n">01.07.2017</span></div>
<div class="c" style="left:750px"><span class="n">20.07.2017</span></div>
<div class="c" style="left:850px"><span class="n">01.07.2017</span></div>
<div class="c" style="left:950px"><span class="n">0.0000</span></div>
<div class="c" style="left:1050px"><span class="n">0.0000</span></div>
<div class="c" style="left:1250px"><span class="n">0</span></div>
<div class="c" style="left:1350px"><span class="n">0</span></div>
<div class="c" style="left:1550px"><span class="s">Cas d</span></div>
<div class="hl"></div>
</div>
<div class="r alt" style="top:596px"><div class="rh"><span>36</span></div>
<div class="c" style="left:50px"><span class="n">5941547</span></div>
<div class="c" style="left:150px"><span class="s">Cas din lapte CO...</span></div>
<div class="c" style="left:250px"><span class="s">Branzeturi vechi</span></div>
<div class="c" style="left:350px"><span class="s">kg</span></div>
<div class="c" style="left:450px"><span class="n">5941547012109</span></div>
<div class="c" style="left:550px"><span class="n">1.2100</span></div>
<div class="c ra" style="left:650px"><span class="n">01.07.2017</span></div>
<div class="c" style="left:750px"><span class="n">20.07.2017</span></div>
<div class="c" style="left:850px"><span class="n">01.07.2017</span></div>
<div class="c" style="left:950px"><span class="n">0.0000</span></div>
<div class="c" style="left:1050px"><span class="n">0.0000</span></div>
<div class="c" style="left:1250px"><span class="n">0</span></div>
<div class="c" style="left:1350px"><span class="n">0</span></div>
<div class="c" style="left:1550px"><span class="s">Cas d</span></div>
<div class="hl"></div>
</div>
<div class="r" style="top:613px"><div class="rh"><span>37</span></div>
<div class="c" style="left:50px"><span class="n">5941547</span></div>
<div class="c" style="left:150px"><span class="s">Cas din lapte CO...</span></div>
<div class="c" style="left:250px"><span class="s">Branzeturi vechi</span></div>
<div class="c" style="left:350px"><span class="s">kg</span></div>
<div class="c" style="left:450px"><span class="n">5941547014806</span></div>
<div class="c" style="left:550px"><span class="n">1.4800</span></div>
<div class="c ra" style="left:650px"><span class="n">01.07.2017</span></div>
<div class="c" style="left:750px"><span class="n">20.07.2017</span></div>
<div class="c" style="left:850px"><span class="n">01.07.2017</span></div>
<div class="c" style="left:950px"><span class="n">0.0000</span></div>
<div class="c" style="left:1050px"><span class="n">0.0000</span></div>
<div class="c" style="left:1250px"><span class="n">0</span></div>
<div class="c" style="left:1350px"><span class="n">0</span></div>
<div class="c" style="left:1550px"><span class="s">Cas d</span></div>
<div class="hl"></div>
</div>
<div class="vl" style="left:149px;top:0;height:624px"></div>
<div class="vl" style="left:249px;top:0;height:624px"></div>
<div class="vl" style="left:349px;top:0;height:624px"></div>
<div class="vl" style="left:449px;top:0;height:624px"></div>
<div class="vl" style="left:549px;top:0;height:624px"></div>
<div class="vl" style="left:649px;top:0;height:624px"></div>
<div class="vl" style="left:749px;top:0;height:624px"></div>
<div class="vl" style="left:849px;top:0;height:624px"></div>
<div class="vl" style="left:949px;top:0;height:624px"></div>
<div class="vl" style="left:1049px;top:0;height:624px"></div>
<div class="vl" style="left:1149px;top:0;height:624px"></div>
<div class="vl" style="left:1249px;top:0;height:624px"></div>
<div class="vl" style="left:1349px;top:0;height:624px"></div>
<div class="vl" style="left:1449px;top:0;height:624px"></div>
<div class="vl" style="left:1549px;top:0;height:624px"></div>
<div class="vl" style="left:1649px;top:0;height:624px"></div>
</div>
<div class="vl" style="left:149px;top:21px;height:20px"></div>
<div class="vl" style="left:249px;top:21px;height:20px"></div>
<div class="vl" style="left:349px;top:21px;height:20px"></div>
<div class="vl" style="left:449px;top:21px;height:20px"></div>
<div class="vl" style="left:549px;top:21px;height:20px"></div>
<div class="vl" style="left:649px;top:21px;height:20px"></div>
<div class="vl" style="left:749px;top:21px;height:20px"></div>
<div class="vl" style="left:849px;top:21px;height:20px"></div>
<div class="vl" style="left:949px;top:21px;height:20px"></div>
<div class="vl" style="left:1049px;top:21px;height:20px"></div>
<div class="vl" style="left:1149px;top:21px;height:20px"></div>
<div class="vl" style="left:1249px;top:21px;height:20px"></div>
<div class="vl" style="left:1349px;top:21px;height:20px"></div>
<div class="vl" style="left:1449px;top:21px;height:20px"></div>
<div class="vl" style="left:1549px;top:21px;height:20px"></div>
<div class="vl" style="left:1649px;top:21px;height:20px"></div>
<div class="hl" style="top:41px"></div>
<div id="gtop"></div><div id="vs"><div class="up"></div><div class="th"><b style="top:5px"></b><b style="top:7px"></b><b style="top:9px"></b><b style="top:11px"></b></div><div class="dn"></div></div>
<div id="nav">
<div class="np"></div>
<span class="nt" style="left:5px">Inregistrarea:</span>
<div class="bar" style="left:80px;top:4px"></div><div class="tri-l" style="left:83px;top:4px"></div>
<div class="tri-l" style="left:102px;top:4px;border-right-color:#a9a9a2"></div>
<div class="inp">1</div>
<span class="nt" style="left:163px">Din</span>
<span class="nt" style="left:190px">30,313</span>
<div class="tri-r" style="left:237px;top:4px"></div>
<div class="tri-r" style="left:255px;top:4px"></div><div class="bar" style="left:261px;top:4px"></div>
<div class="sep"></div>
<div id="hs"><div class="tri-l" style="left:6px;top:4px;border-right-color:#3f4f6f"></div><div class="th"><b style="left:572px"></b><b style="left:574px"></b><b style="left:576px"></b><b style="left:578px"></b></div><div class="tri-r" style="left:1299px;top:4px;border-left-color:#3f4f6f"></div></div>
<div id="corner"></div>
</div>

</div><svg class="abs" style="left:1536px;top:9px" width="72" height="14" viewBox="0 0 72 14">
<rect x="3.5" y="6.5" width="10" height="4" rx="1.3" fill="#fff" stroke="#474d63" stroke-width="1.2"/>
<rect x="34.5" y="2.5" width="6" height="6" rx=".8" fill="#fff" stroke="#474d63" stroke-width="1.1"/>
<rect x="36.6" y="4.4" width="2.2" height="2.2" fill="#474d63"/>
<rect x="30.5" y="4.5" width="7" height="6" rx=".8" fill="#fff" stroke="#474d63" stroke-width="1.1"/>
<rect x="32.5" y="6.8" width="3" height="1.8" fill="#fff" stroke="#474d63" stroke-width="1"/>
<path d="M57.5 2.5 L60.7 2.5 L62.5 4.6 L64.3 2.5 L67.5 2.5 L64.4 6.5 L67.5 10.5 L64.3 10.5 L62.5 8.4 L60.7 10.5 L57.5 10.5 L60.6 6.5 Z" fill="#fff" stroke="#474d63" stroke-width="1.2" stroke-linejoin="round"/>
</svg>
<svg class="abs" style="left:1540px;top:42px" width="56" height="56" viewBox="0 0 56 56">
<defs>
<radialGradient id="cf" cx="50%" cy="42%" r="60%"><stop offset="0" stop-color="#f6f6f6"/><stop offset=".55" stop-color="#e9e9ea"/><stop offset="1" stop-color="#bdbdc0"/></radialGradient>
<linearGradient id="cr" x1="0" y1="0" x2="0" y2="1"><stop offset="0" stop-color="#8fb0e4"/><stop offset="1" stop-color="#6f97d6"/></linearGradient>
<radialGradient id="sh" cx="50%" cy="50%" r="50%"><stop offset="0" stop-color="#9a9a9a" stop-opacity=".55"/><stop offset="1" stop-color="#9a9a9a" stop-opacity="0"/></radialGradient>
</defs>
<ellipse cx="28" cy="51.5" rx="24" ry="1.6" fill="url(#sh)"/>
<circle cx="28" cy="28.2" r="22.9" fill="url(#cr)"/>
<circle cx="28" cy="28.2" r="22.4" fill="none" stroke="#a9c3ee" stroke-width=".8" opacity=".8"/>
<circle cx="28" cy="28.2" r="18.6" fill="url(#cf)"/>
<circle cx="28" cy="28.2" r="18.6" fill="none" stroke="#9aa3b4" stroke-width=".9" opacity=".7"/>
<path d="M13 20 A17 17 0 0 1 43 20 Q28 12 13 20Z" fill="#c9c9cc" opacity=".55"/>
<rect x="26.9" y="12.6" width="1.6" height="1.6" fill="#222" transform="rotate(45 27.7 13.4)"/>
<rect x="26.9" y="42.3" width="1.6" height="1.6" fill="#222" transform="rotate(45 27.7 43.1)"/>
<rect x="12.2" y="27.4" width="1.6" height="1.6" fill="#222" transform="rotate(45 13 28.2)"/>
<rect x="42.6" y="27.4" width="1.6" height="1.6" fill="#222" transform="rotate(45 43.4 28.2)"/>
<line x1="29.3" y1="17" x2="29.3" y2="41" stroke="#b9b9bb" stroke-width=".8"/>
<line x1="29" y1="29.6" x2="39" y2="29.6" stroke="#b9b9bb" stroke-width=".8"/>
<line x1="27.7" y1="28.2" x2="27.7" y2="41" stroke="#c47a62" stroke-width="1.3"/>
<line x1="27.7" y1="28.2" x2="27.7" y2="16" stroke="#111" stroke-width="1.4"/>
<line x1="27.7" y1="28.4" x2="38" y2="28.4" stroke="#111" stroke-width="1.6"/>
<circle cx="27.7" cy="28.3" r="2" fill="#fff" stroke="#222" stroke-width="1.2"/>
</svg>
<div class="btn" style="left:1419px;top:849px;width:100px;height:24px;line-height:22px">Export</div>
<div class="btn" style="left:1525px;top:849px;width:75px;height:24px;line-height:22px">Inchide</div>
<div id="task" class="abs" style="left:8px;top:878px;width:1600px;height:8px;background:#2b2a27">
<div class="abs" style="left:170px;top:0;width:118px;height:8px;background:#a5201f"></div>
<div class="abs" style="left:1176px;top:0;width:125px;height:8px;background:#55524d"></div>
<div class="abs" style="left:17px;top:7px;width:8px;height:1px;background:#d8d8d8"></div>
<div class="abs" style="left:52px;top:7px;width:3px;height:1px;background:#3c78b4"></div>
<div class="abs" style="left:179px;top:7px;width:3px;height:1px;background:#d86a6a"></div>
<div class="abs" style="left:304px;top:7px;width:3px;height:1px;background:#d89030"></div>
<div class="abs" style="left:560px;top:7px;width:4px;height:1px;background:#c8b030"></div>
<div class="abs" style="left:685px;top:7px;width:9px;height:1px;background:#7a7f8c"></div>
<div class="abs" style="left:810px;top:7px;width:6px;height:1px;background:#c8ccd6"></div>
<div class="abs" style="left:936px;top:7px;width:8px;height:1px;background:#2e64a8"></div>
<div class="abs" style="left:1062px;top:7px;width:7px;height:1px;background:#d0d0d0"></div>
<div class="abs" style="left:1340px;top:6px;width:1px;height:2px;background:#bbb"></div>
<div class="abs" style="left:1362px;top:7px;width:4px;height:1px;background:#ccc"></div>
<div class="abs" style="left:1562px;top:7px;width:9px;height:1px;background:#e0e0e0"></div>
<div class="abs" style="left:1595px;top:0px;width:1px;height:8px;background:#55524d"></div>
</div>
<svg class="abs" style="left:1598px;top:363px" width="17" height="22" viewBox="0 0 17 22" shape-rendering="crispEdges"><rect x="5" y="0" width="2" height="1" fill="#000"/><rect x="4" y="1" width="1" height="1" fill="#000"/><rect x="5" y="1" width="2" height="1" fill="#fff"/><rect x="7" y="1" width="1" height="1" fill="#000"/><rect x="4" y="2" width="1" height="1" fill="#000"/><rect x="5" y="2" width="2" height="1" fill="#fff"/><rect x="7" y="2" width="1" height="1" fill="#000"/><rect x="4" y="3" width="1" height="1" fill="#000"/><rect x="5" y="3" width="2" height="1" fill="#fff"/><rect x="7" y="3" width="1" height="1" fill="#000"/><rect x="4" y="4" width="1" height="1" fill="#000"/><rect x="5" y="4" width="2" height="1" fill="#fff"/><rect x="7" y="4" width="1" height="1" fill="#000"/><rect x="4" y="5" width="1" height="1" fill="#000"/><rect x="5" y="5" width="2" height="1" fill="#fff"/><rect x="7" y="5" width="3" height="1" fill="#000"/><rect x="4" y="6" width="1" height="1" fill="#000"/><rect x="5" y="6" width="2" height="1" fill="#fff"/><rect x="7" y="6" width="1" height="1" fill="#000"/><rect x="8" y="6" width="2" height="1" fill="#fff"/><rect x="10" y="6" width="1" height="1" fill="#000"/><rect x="4" y="7" width="1" height="1" fill="#000"/><rect x="5" y="7" width="2" height="1" fill="#fff"/><rect x="7" y="7" width="1" height="1" fill="#000"/><rect x="8" y="7" width="2" height="1" fill="#fff"/><rect x="10" y="7" width="3" height="1" fill="#000"/><rect x="4" y="8" width="1" height="1" fill="#000"/><rect x="5" y="8" width="2" height="1" fill="#fff"/><rect x="7" y="8" width="1" height="1" fill="#000"/><rect x="8" y="8" width="2" height="1" fill="#fff"/><rect x="10" y="8" width="1" height="1" fill="#000"/><rect x="11" y="8" width="2" height="1" fill="#fff"/><rect x="13" y="8" width="2" height="1" fill="#000"/><rect x="0" y="9" width="3" height="1" fill="#000"/><rect x="4" y="9" width="1" height="1" fill="#000"/><rect x="5" y="9" width="2" height="1" fill="#fff"/><rect x="7" y="9" width="1" height="1" fill="#000"/><rect x="8" y="9" width="2" height="1" fill="#fff"/><rect x="10" y="9" width="1" height="1" fill="#000"/><rect x="11" y="9" width="2" height="1" fill="#fff"/><rect x="13" y="9" width="1" height="1" fill="#000"/><rect x="14" y="9" width="1" height="1" fill="#fff"/><rect x="15" y="9" width="1" height="1" fill="#000"/><rect x="0" y="10" width="1" height="1" fill="#000"/><rect x="1" y="10" width="2" height="1" fill="#fff"/><rect x="3" y="10" width="2" height="1" fill="#000"/><rect x="5" y="10" width="2" height="1" fill="#fff"/><rect x="7" y="10" width="1" height="1" fill="#000"/><rect x="8" y="10" width="2" height="1" fill="#fff"/><rect x="10" y="10" width="1" height="1" fill="#000"/><rect x="11" y="10" width="2" height="1" fill="#fff"/><rect x="13" y="10" width="1" height="1" fill="#000"/><rect x="14" y="10" width="2" height="1" fill="#fff"/><rect x="16" y="10" width="1" height="1" fill="#000"/><rect x="0" y="11" width="1" height="1" fill="#000"/><rect x="1" y="11" width="3" height="1" fill="#fff"/><rect x="4" y="11" width="1" height="1" fill="#000"/><rect x="5" y="11" width="11" height="1" fill="#fff"/><rect x="16" y="11" width="1" height="1" fill="#000"/><rect x="1" y="12" width="1" height="1" fill="#000"/><rect x="2" y="12" width="2" height="1" fill="#fff"/><rect x="4" y="12" width="1" height="1" fill="#000"/><rect x="5" y="12" width="11" height="1" fill="#fff"/><rect x="16" y="12" width="1" height="1" fill="#000"/><rect x="2" y="13" width="1" height="1" fill="#000"/><rect x="3" y="13" width="1" height="1" fill="#fff"/><rect x="4" y="13" width="1" height="1" fill="#000"/><rect x="5" y="13" width="11" height="1" fill="#fff"/><rect x="16" y="13" width="1" height="1" fill="#000"/><rect x="2" y="14" width="1" height="1" fill="#000"/><rect x="3" y="14" width="13" height="1" fill="#fff"/><rect x="16" y="14" width="1" height="1" fill="#000"/><rect x="3" y="15" width="1" height="1" fill="#000"/><rect x="4" y="15" width="12" height="1" fill="#fff"/><rect x="16" y="15" width="1" height="1" fill="#000"/><rect x="3" y="16" width="1" height="1" fill="#000"/><rect x="4" y="16" width="11" height="1" fill="#fff"/><rect x="15" y="16" width="1" height="1" fill="#000"/><rect x="4" y="17" width="1" height="1" fill="#000"/><rect x="5" y="17" width="10" height="1" fill="#fff"/><rect x="15" y="17" width="1" height="1" fill="#000"/><rect x="4" y="18" width="1" height="1" fill="#000"/><rect x="5" y="18" width="10" height="1" fill="#fff"/><rect x="15" y="18" width="1" height="1" fill="#000"/><rect x="5" y="19" width="1" height="1" fill="#000"/><rect x="6" y="19" width="8" height="1" fill="#fff"/><rect x="14" y="19" width="1" height="1" fill="#000"/><rect x="5" y="20" width="1" height="1" fill="#000"/><rect x="6" y="20" width="8" height="1" fill="#fff"/><rect x="14" y="20" width="1" height="1" fill="#000"/><rect x="5" y="21" width="10" height="1" fill="#000"/></svg>
</body></html>
